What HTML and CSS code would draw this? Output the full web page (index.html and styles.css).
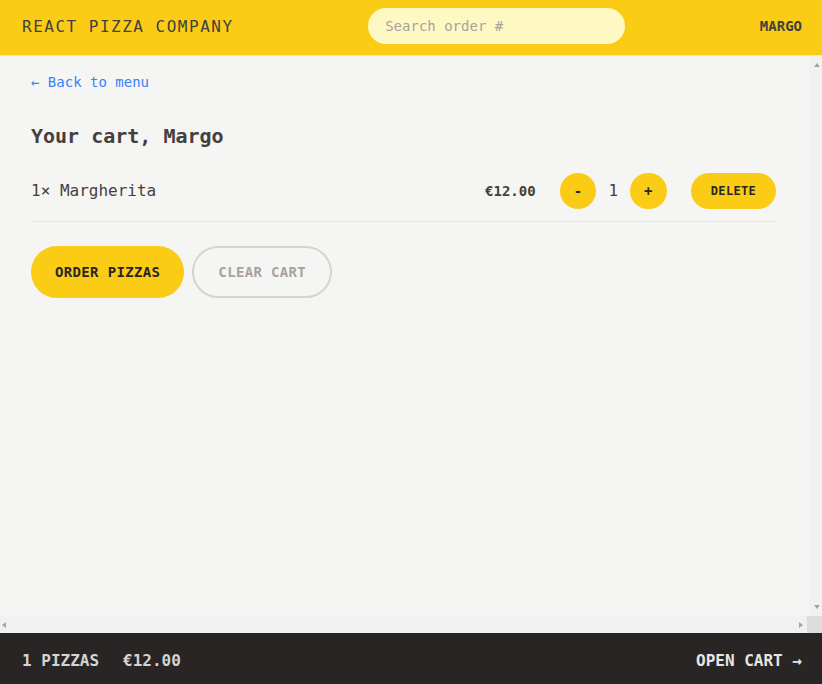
FILE: index.html
```html
<!DOCTYPE html>
<html lang="en">
<head>
<meta charset="utf-8">
<title>React Pizza Company</title>
<link rel="stylesheet" href="styles.css">
</head>
<body>
<div class="app">
  <header class="header">
    <a class="logo" href="#">React Pizza Company</a>
    <input class="search" type="text" placeholder="Search order #">
    <div class="username">Margo</div>
  </header>
  <div class="viewport">
    <div class="scroller">
      <main class="main">
        <div class="cart">
          <a class="back-link" href="#">&larr; Back to menu</a>
          <h2 class="cart-title">Your cart, Margo</h2>
          <ul class="cart-list">
            <li class="cart-item">
              <p class="item-name">1&times; Margherita</p>
              <div class="item-actions">
                <p class="item-price">€12.00</p>
                <div class="qty">
                  <button class="btn btn-round">-</button>
                  <span class="qty-num">1</span>
                  <button class="btn btn-round">+</button>
                </div>
                <button class="btn btn-small">Delete</button>
              </div>
            </li>
          </ul>
          <div class="cart-buttons">
            <a class="btn btn-primary" href="#">Order pizzas</a>
            <button class="btn btn-secondary">Clear cart</button>
          </div>
        </div>
      </main>
    </div>
    <div class="vbar">
      <span class="arrow arrow-up"></span>
      <span class="arrow arrow-down"></span>
    </div>
    <div class="hbar">
      <span class="arrow arrow-left"></span>
      <span class="arrow arrow-right"></span>
    </div>
    <div class="corner"></div>
  </div>
  <footer class="footer">
    <p class="overview"><span>1 pizzas</span><span class="overview-price">€12.00</span></p>
    <a class="open-cart" href="#">Open cart &rarr;</a>
  </footer>
</div>
</body>
</html>
```

FILE: styles.css
```css
* {
  box-sizing: border-box;
  margin: 0;
  padding: 0;
}

html, body {
  height: 100%;
}

body {
  font-family: "DejaVu Sans Mono", "Liberation Mono", monospace;
  background: #f5f5f4;
  color: #44403c;
  overflow: hidden;
}

a {
  color: inherit;
  text-decoration: none;
}

.app {
  display: grid;
  grid-template-rows: auto 1fr auto;
  height: 100vh;
}

.header {
  display: flex;
  align-items: center;
  justify-content: space-between;
  background: #facc15;
  border-bottom: 1px solid #e7e5e4;
  padding: 8px 20px 11px 22px;
  text-transform: uppercase;
}

.logo {
  font-size: 16px;
  line-height: 24px;
  letter-spacing: 1.5px;
  color: #44403c;
  padding-top: 1px;
}

.search {
  width: 257px;
  height: 36px;
  border: none;
  outline: none;
  border-radius: 9999px;
  background: #fef9c3;
  padding: 8px 16px 8px 17px;
  font-family: inherit;
  font-size: 14px;
  line-height: 20px;
  color: #44403c;
}

.search::placeholder {
  color: #a8a29e;
}

.username {
  font-size: 14px;
  line-height: 20px;
  font-weight: 700;
  color: #44403c;
}

/* scroll area with drawn scrollbars */
.viewport {
  display: grid;
  grid-template-columns: 1fr 15px;
  grid-template-rows: 1fr 17px;
  min-height: 0;
}

.scroller {
  overflow: hidden;
  min-height: 0;
}

.vbar {
  display: flex;
  flex-direction: column;
  justify-content: space-between;
  align-items: flex-start;
  padding: 7px 0 7px 5px;
  background: #f1f1f1;
  border-left: 2px solid #f5f5f4;
}

.hbar {
  display: flex;
  align-items: center;
  justify-content: space-between;
  padding: 0 4px 0 2px;
  background: #f1f1f1;
}

.corner {
  background: #dcdcdc;
}

.arrow {
  display: block;
  width: 1px;
  height: 0;
  border-style: solid;
  border-color: transparent;
}

.arrow-up {
  border-width: 0 3px 4px;
  border-bottom-color: #a3a3a3;
}

.arrow-down {
  border-width: 4px 3px 0;
  border-top-color: #a3a3a3;
}

.arrow-left {
  width: 0;
  height: 1px;
  border-width: 3px 4px 3px 0;
  border-right-color: #a3a3a3;
}

.arrow-right {
  width: 0;
  height: 1px;
  border-width: 3px 0 3px 4px;
  border-left-color: #a3a3a3;
}

.main {
  max-width: 769px;
  margin: 0 auto;
}

.cart {
  padding: 16px 12px 12px;
}

.back-link {
  display: inline-block;
  font-size: 14px;
  line-height: 20px;
  color: #3b82f6;
}

.cart-title {
  margin-top: 30px;
  font-size: 20px;
  line-height: 28px;
  font-weight: 700;
  color: #44403c;
}

.cart-list {
  list-style: none;
  margin-top: 11px;
}

.cart-item {
  display: flex;
  align-items: center;
  justify-content: space-between;
  padding: 12px 0;
  border-bottom: 1px solid #e7e5e4;
}

.item-name {
  font-size: 16px;
  line-height: 24px;
}

.item-actions {
  display: flex;
  align-items: center;
  gap: 24px;
}

.item-price {
  font-size: 14px;
  line-height: 20px;
  font-weight: 700;
}

.qty {
  display: flex;
  align-items: center;
  gap: 12px;
}

.qty-num {
  font-size: 16px;
  line-height: 24px;
  font-weight: 500;
}

.btn {
  display: inline-block;
  border: none;
  border-radius: 9999px;
  background: #facc15;
  color: #292524;
  font-family: inherit;
  font-weight: 700;
  text-transform: uppercase;
  letter-spacing: 0.025em;
  cursor: pointer;
}

.btn-round {
  font-size: 14px;
  line-height: 20px;
  padding: 8px 14px;
}

.btn-small {
  font-size: 12px;
  line-height: 16px;
  padding: 10px 20px;
}

.cart-buttons {
  display: flex;
  gap: 8px;
  margin-top: 24px;
}

.btn-primary {
  font-size: 14px;
  line-height: 20px;
  padding: 16px 24px;
}

.btn-secondary {
  font-size: 14px;
  line-height: 20px;
  padding: 14px 24px;
  background: transparent;
  border: 2px solid #d6d3d1;
  color: #a8a29e;
}

.footer {
  display: flex;
  align-items: center;
  justify-content: space-between;
  height: 51px;
  padding: 5px 20px 0 22px;
  background: #292524;
  color: #e7e5e4;
  text-transform: uppercase;
  font-size: 16px;
  line-height: 24px;
}

.overview {
  font-weight: 700;
  color: #d6d3d1;
  display: flex;
  gap: 24px;
}

.open-cart {
  font-weight: 700;
}
```
